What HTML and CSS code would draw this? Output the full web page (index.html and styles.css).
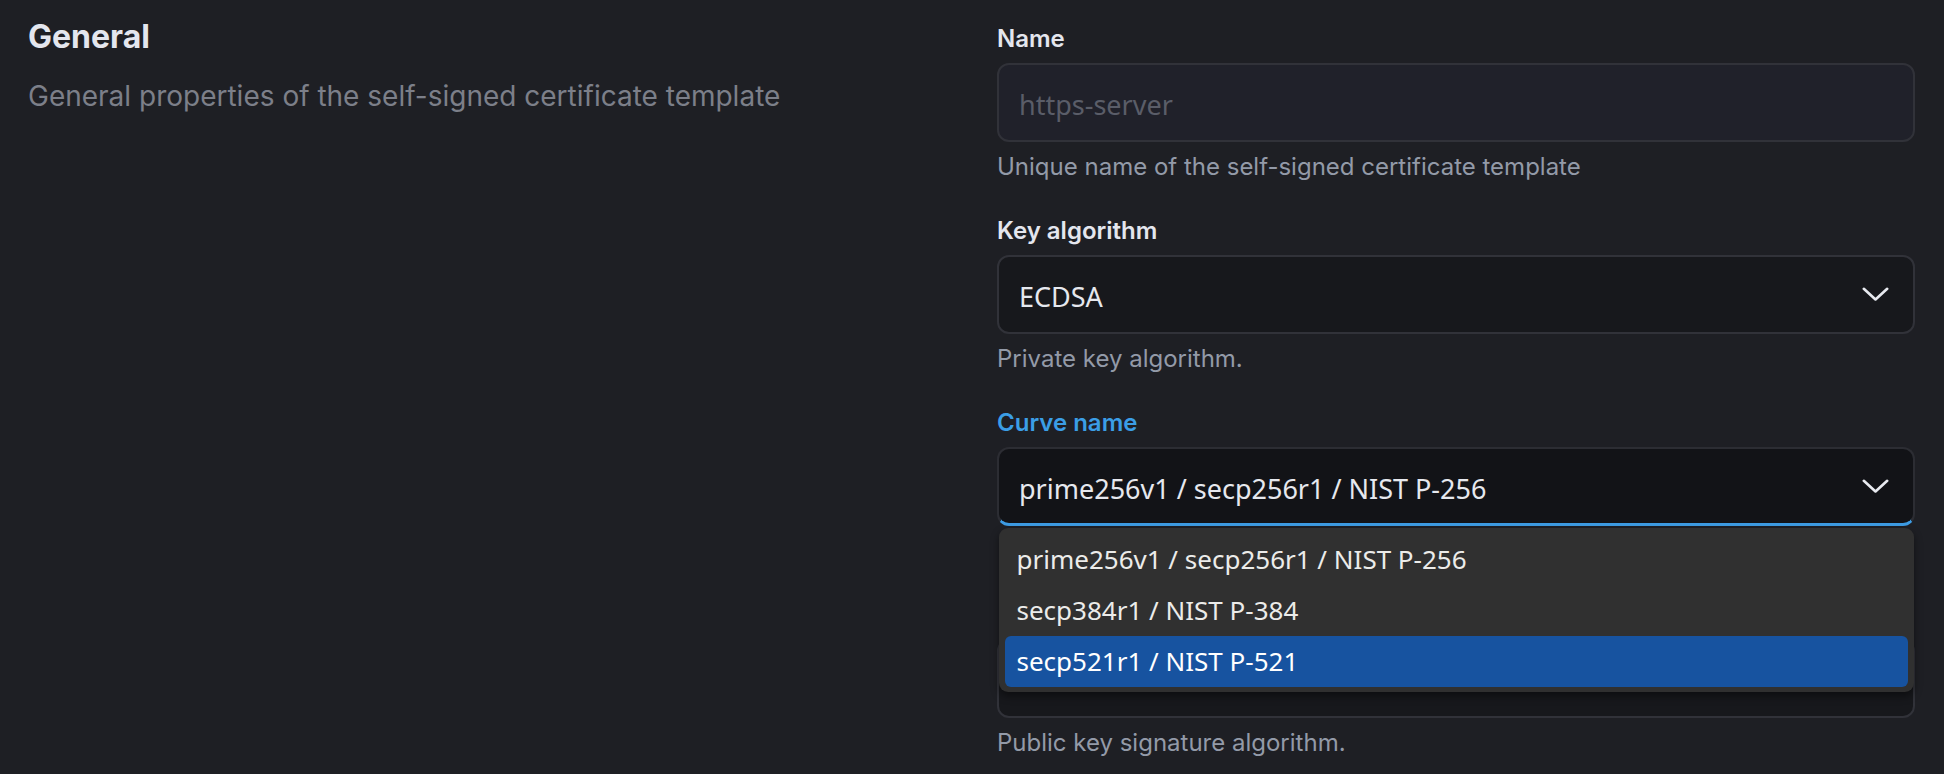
FILE: index.html
```html
<!DOCTYPE html>
<html lang="en">
<head>
<meta charset="utf-8">
<title>Self-signed certificate template</title>
<link rel="stylesheet" href="styles.css">
</head>
<body>
<main class="page">
  <section class="intro">
    <h2 class="title">General</h2>
    <p class="desc">General properties of the self-signed certificate template</p>
  </section>
  <section class="fields">
    <div class="field">
      <label class="label">Name</label>
      <div class="control input"><span class="text placeholder">https-server</span></div>
      <p class="help">Unique name of the self-signed certificate template</p>
    </div>
    <div class="field">
      <label class="label">Key algorithm</label>
      <div class="control select">
        <span class="text">ECDSA</span>
        <svg class="chev" width="27" height="15" viewBox="0 0 27 15"><polyline points="1.8,1.8 13.5,12.5 25.2,1.8" fill="none" stroke="currentColor" stroke-width="2.6" stroke-linecap="round" stroke-linejoin="round"/></svg>
      </div>
      <p class="help">Private key algorithm.</p>
    </div>
    <div class="field">
      <label class="label label-active">Curve name</label>
      <div class="select-wrap">
        <div class="control select select-focus">
          <span class="text">prime256v1 / secp256r1 / NIST P-256</span>
          <svg class="chev" width="27" height="15" viewBox="0 0 27 15"><polyline points="1.8,1.8 13.5,12.5 25.2,1.8" fill="none" stroke="currentColor" stroke-width="2.6" stroke-linecap="round" stroke-linejoin="round"/></svg>
        </div>
        <ul class="menu">
          <li class="option">prime256v1 / secp256r1 / NIST P-256</li>
          <li class="option">secp384r1 / NIST P-384</li>
          <li class="option option-hl">secp521r1 / NIST P-521</li>
        </ul>
      </div>
      <div class="help help-hidden"></div>
    </div>
    <div class="field">
      <div class="label label-hidden"></div>
      <div class="control select">
        <span class="text"></span>
        <svg class="chev" width="27" height="15" viewBox="0 0 27 15"><polyline points="1.8,1.8 13.5,12.5 25.2,1.8" fill="none" stroke="currentColor" stroke-width="2.6" stroke-linecap="round" stroke-linejoin="round"/></svg>
      </div>
      <p class="help">Public key signature algorithm.</p>
    </div>
  </section>
</main>
</body>
</html>
```
FILE: styles.css
```css
* { box-sizing: border-box; }
html, body { margin: 0; padding: 0; }
body {
  background: #1e1f24;
  font-family: Inter, "Liberation Sans", sans-serif;
  color: #e4e6ee;
  overflow: hidden;
}
.page {
  display: grid;
  grid-template-columns: 918px 918px;
  column-gap: 51px;
  padding: 21px 29px 0 28px;
  height: 774px;
}
.intro { padding-top: 1px; }
.title {
  margin: 0;
  font-size: 32px;
  line-height: 30px;
  font-weight: 700;
  color: #e4e6ee;
}
.desc {
  margin: 26px 0 0;
  font-size: 28px;
  line-height: 36px;
  color: #7c7f89;
}
.fields {
  display: flex;
  flex-direction: column;
  gap: 28px;
}
.field { display: flex; flex-direction: column; }
.label {
  font-size: 24px;
  line-height: 36px;
  font-weight: 600;
  color: #e4e6ee;
}
.label-hidden, .help-hidden { height: 36px; }
.label-active { color: #3b9ee6; }
.control {
  margin-top: 6px;
  height: 79px;
  border: 2px solid #313239;
  border-radius: 12px;
  display: flex;
  align-items: center;
  padding: 0 24px 0 20px;
  font-family: "Noto Sans", "Open Sans", sans-serif;
  font-size: 27px;
  color: #e6e8ee;
}
.text { padding-top: 5px; line-height: 40px; white-space: nowrap; }
.input { background: #20212a; }
.placeholder { color: #5a5d68; }
.select {
  background: #17181c;
  justify-content: space-between;
}
.select-wrap { position: relative; margin-top: 6px; }
.select-wrap .control { margin-top: 0; }
.select-focus {
  background: #121317;
  border-color: #2c2d33;
  border-bottom: 3px solid #3d9ce4;
}
.chev { color: #e8eaf0; flex: none; }
.help {
  margin: 7px 0 0;
  font-size: 24px;
  line-height: 36px;
  color: #939aa8;
}
.menu {
  position: absolute;
  top: calc(100% + 2px);
  left: 1.5px;
  right: 1.5px;
  margin: 0;
  padding: 6px 6px 5px;
  list-style: none;
  background: #303030;
  border-radius: 9px;
  box-shadow: 0 4px 8px rgba(0, 0, 0, 0.45);
  z-index: 2;
}
.option {
  height: 51px;
  line-height: 51px;
  padding-left: 12px;
  border-radius: 6px;
  font-family: "Noto Sans", "Open Sans", sans-serif;
  font-size: 26px;
  color: #ececea;
  white-space: nowrap;
}
.option-hl { background: #1753a0; color: #ffffff; }
```
